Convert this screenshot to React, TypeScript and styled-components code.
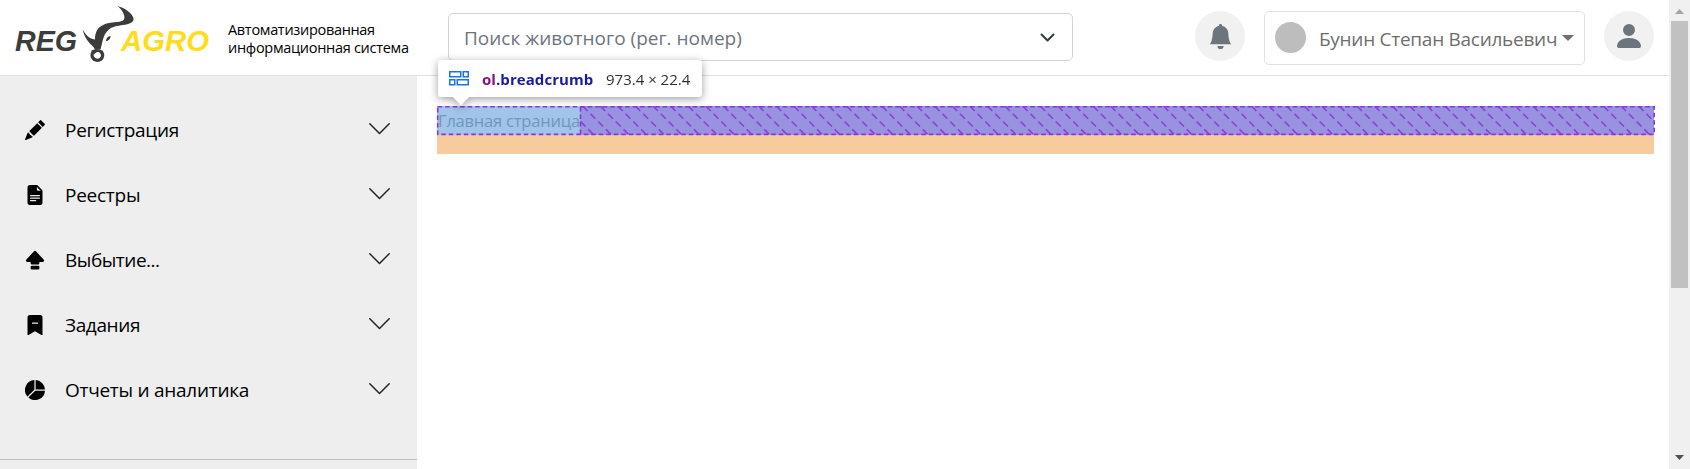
import React from 'react';
import styled, { createGlobalStyle } from 'styled-components';
import { BsPencilFill, BsFileEarmarkTextFill, BsCapslockFill, BsBookmarkDashFill, BsPieChartFill, BsBellFill, BsPersonFill } from 'react-icons/bs';

const Global = createGlobalStyle`
  * { box-sizing: border-box; }
  body { margin: 0; background: #fff; overflow: hidden; font-family: "Open Sans", "Noto Sans", sans-serif; }
`;

const Shell = styled.div`display: flex; width: 1690px; height: 469px; overflow: hidden;`;
const Page = styled.div`display: flex; flex-direction: column; width: 1669px;`;
const Header = styled.header`
  display: flex; height: 76px; flex: none; align-items: flex-start;
  border-bottom: 1px solid #dee2e6;
`;
const Logo = styled.svg`width: 200px; height: 70px; margin-left: 14px; flex: none;`;
const Run = styled.span<{ $size: number; $space?: number; $color?: string; $weight?: number }>`
  display: block; white-space: nowrap;
  font-size: ${p => p.$size}px;
  letter-spacing: ${p => p.$space ?? 0}px;
  color: ${p => p.$color ?? '#000'};
  font-weight: ${p => p.$weight ?? 400};
`;
const Tagline = styled.div`width: 220px; margin: 21px 0 0 14px; line-height: 18px; flex: none;`;
const Search = styled.div`
  display: flex; align-items: center; justify-content: space-between;
  width: 625px; height: 48px; margin-top: 13px; padding: 0 17px 0 15px; flex: none;
  border: 1px solid #ced4da; border-radius: 5px;
`;
const SearchText = styled.div`padding-top: 2px;`;
const SearchArrow = styled.svg`width: 15px; height: 10px; margin-top: 1px;`;
const RoundButton = styled.div<{ $left: number }>`
  display: flex; align-items: center; justify-content: center;
  width: 50px; height: 50px; margin: 11px 0 0 ${p => p.$left}px; flex: none;
  border-radius: 50%; background: #f1f1f1; color: #6c757d;
`;
const UserBox = styled.div`
  display: flex; align-items: center; width: 321px; height: 54px;
  margin: 11px 0 0 19px; padding: 0 10px 1px; flex: none;
  border: 1px solid #dee2e6; border-radius: 5px;
`;
const Avatar = styled.div`width: 31px; height: 31px; margin-right: 13px; border-radius: 50%; background: #bdbdbd; flex: none;`;
const UserName = styled.div`width: 243px; padding-top: 3px; flex: none;`;
const Caret = styled.div`border: 6px solid transparent; border-top-color: #6e6e6e; border-bottom: 0; flex: none;`;

const Body = styled.div`display: flex; flex: 1;`;
const Sidebar = styled.aside`display: flex; flex-direction: column; width: 417px; padding-top: 22px; background: #eee;`;
const MenuItem = styled.div`display: flex; align-items: center; height: 65px; padding: 0 27px 0 25px;`;
const MenuIcon = styled.div`display: flex; width: 40px; margin-top: -1px; flex: none;`;
const MenuLabel = styled.div`flex: 1; padding-bottom: 2px;`;
const MenuArrow = styled.svg`width: 21px; height: 12px; margin-top: -4px;`;
const Divider = styled.div`height: 1px; margin-top: 36px; background: #bcbebf;`;

const Main = styled.main`flex: 1; padding: 30px 0 0 20px;`;
const Crumbs = styled.div`position: relative; width: 1217px; height: 48px;`;
const CrumbStrip = styled.div`display: flex; height: 29px;`;
const Crumb = styled.div`width: 143px; padding-left: 1px; line-height: 29px; background: #a0c5e8;`;
const FreeSpace = styled.div`flex: 1; background: #9892e1;`;
const MarginStrip = styled.div`height: 19px; background: #f8cb9c;`;
const Hatch = styled.svg`position: absolute; left: 0; top: 0; width: 1218px; height: 30px; overflow: visible;`;
const Tip = styled.div`
  position: absolute; left: 1px; top: -46px; width: 264px; height: 37px;
  display: flex; align-items: center; padding-left: 11px;
  background: #fff; border-radius: 3px; filter: drop-shadow(0 2px 4px rgba(0,0,0,.38));
`;
const TipArrow = styled.svg`position: absolute; left: 14px; top: 36px; width: 18px; height: 10px;`;
const TipIcon = styled.svg`width: 20px; height: 15px; margin-right: 13px; margin-top: -1px;`;
const TipName = styled.div`display: flex; width: 124px;`;

const Scrollbar = styled.div`
  display: flex; flex-direction: column; align-items: center; width: 21px; background: #f0f0f0;
`;
const ScrollUp = styled.svg`width: 9px; height: 5px; margin: 9px 0 7px;`;
const Thumb = styled.div`width: 17px; height: 267px; background: #c1c1c1;`;
const ScrollDown = styled.svg`width: 9px; height: 5px; margin-top: 167px;`;

const menu = [
  { label: 'Регистрация', Icon: BsPencilFill, space: -0.28 },
  { label: 'Реестры', Icon: BsFileEarmarkTextFill, space: -0.25 },
  { label: 'Выбытие...', Icon: BsCapslockFill, space: -0.48 },
  { label: 'Задания', Icon: BsBookmarkDashFill, space: -0.38 },
  { label: 'Отчеты и аналитика', Icon: BsPieChartFill, space: -0.27 },
];

const hatches = Array.from({ length: 64 }, (_, i) => 156 + i * 17.6);

export default function App() {
  return (
    <Shell>
      <Global />
      <Page>
        <Header>
          <Logo viewBox="14 0 200 70">
            <g fontFamily="Liberation Sans, sans-serif" fontWeight="700" fontStyle="italic" fontSize="30">
              <text x="15" y="50.5" fill="#3c3c3b" textLength="62" lengthAdjust="spacingAndGlyphs">REG</text>
              <text x="121" y="50.5" fill="#ffdc1e" textLength="88" lengthAdjust="spacingAndGlyphs">AGRO</text>
            </g>
            <path fill="#3c3c3b" d="M117.5 6C125 8 133 13.5 133.6 19C133.5 23.5 127 24.5 120 25.5C113 26.5 110 28 107 31.5C103.5 35 103 40 100.5 49.5L95 50C94.5 45.5 85.5 43 82.7 29.5C85.5 34.5 88.5 38.5 95 39.5C95 32 97.5 27.5 104 24.5C111 21.5 119 23 123 20.5C127 17.5 122 9.5 117.5 6Z" />
            <path fill="#3c3c3b" d="M106 41C106 38 108 36.5 110.5 36C110.5 38.5 109 41 106 41Z" />
            <path fill="none" stroke="#3c3c3b" strokeWidth="3.2" d="M93.2 51.5C90.5 56 93 60.3 97.3 60.3C101.8 60.3 104.3 55.5 101.3 51.8" />
            <path fill="#3c3c3b" d="M91.5 50.5C93 49.5 99 48.5 103 51L101.5 54C98 51 96.5 51.5 94 54.5Z" />
          </Logo>
          <Tagline>
            <Run $size={14.5} $space={-0.31}>Автоматизированная</Run>
            <Run $size={14.5} $space={-0.29}>информационная система</Run>
          </Tagline>
          <Search>
            <SearchText><Run $size={19} $color="#6c757d">Поиск животного (рег. номер)</Run></SearchText>
            <SearchArrow viewBox="0 0 15 10"><path d="M1.5 1.5L7.5 7.5L13.5 1.5" fill="none" stroke="#343a40" strokeWidth="2" strokeLinecap="round" strokeLinejoin="round" /></SearchArrow>
          </Search>
          <RoundButton $left={122}><BsBellFill size={25} /></RoundButton>
          <UserBox>
            <Avatar />
            <UserName><Run $size={19} $space={-0.27} $color="#6e6e6e">Бунин Степан Васильевич</Run></UserName>
            <Caret />
          </UserBox>
          <RoundButton $left={19}><BsPersonFill size={32} /></RoundButton>
        </Header>
        <Body>
          <Sidebar>
            {menu.map(({ label, Icon, space }) => (
              <MenuItem key={label}>
                <MenuIcon><Icon size={20} /></MenuIcon>
                <MenuLabel><Run $size={19} $space={space}>{label}</Run></MenuLabel>
                <MenuArrow viewBox="0 0 21 12"><path d="M.8 .8L10.5 10.5L20.2 .8" fill="none" stroke="#212529" strokeWidth="1.5" strokeLinecap="round" strokeLinejoin="round" /></MenuArrow>
              </MenuItem>
            ))}
            <Divider />
          </Sidebar>
          <Main>
            <Crumbs>
              <CrumbStrip>
                <Crumb><Run $size={16.5} $space={-0.2} $color="#6e98c0">Главная страница</Run></Crumb>
                <FreeSpace />
              </CrumbStrip>
              <MarginStrip />
              <Hatch viewBox="0 0 1218 30">
                <defs><clipPath id="free"><rect x="143" y="0" width="1074" height="29" /></clipPath></defs>
                <g stroke="#8a3fd6" strokeWidth="1.6" strokeDasharray="7 4" clipPath="url(#free)">
                  {hatches.map(x => <line key={x} x1={x - 28} y1="0" x2={x} y2="28" />)}
                </g>
                <g stroke="#8a35da" strokeWidth="1.6" strokeDasharray="4.5 3" fill="none">
                  <rect x="0.7" y="0.8" width="1216.5" height="27.6" />
                  <line x1="143.5" y1="1" x2="143.5" y2="28" />
                </g>
              </Hatch>
              <Tip>
                <TipArrow viewBox="0 0 18 10"><path d="M0 0H18L9 9.5Z" fill="#fff" /></TipArrow>
                <TipIcon viewBox="0 0 20 15"><g fill="none" stroke="#1a73e8" strokeWidth="1.5"><rect x=".75" y=".75" width="11" height="5" /><rect x="14.25" y=".75" width="5" height="5" /><rect x=".75" y="8.75" width="5" height="5" /><rect x="8.25" y="8.75" width="11" height="5" /></g></TipIcon>
                <TipName><Run $size={15} $space={0.07} $weight={700} $color="#881280">ol</Run><Run $size={15} $space={0.07} $weight={700} $color="#1a1aa6">.breadcrumb</Run></TipName>
                <Run $size={15} $color="#303030">973.4 × 22.4</Run>
              </Tip>
            </Crumbs>
          </Main>
        </Body>
      </Page>
      <Scrollbar>
        <ScrollUp viewBox="0 0 9 5"><path d="M4.5 0L9 5H0Z" fill="#a3a3a3" /></ScrollUp>
        <Thumb />
        <ScrollDown viewBox="0 0 9 5"><path d="M0 0H9L4.5 5Z" fill="#505050" /></ScrollDown>
      </Scrollbar>
    </Shell>
  );
}
